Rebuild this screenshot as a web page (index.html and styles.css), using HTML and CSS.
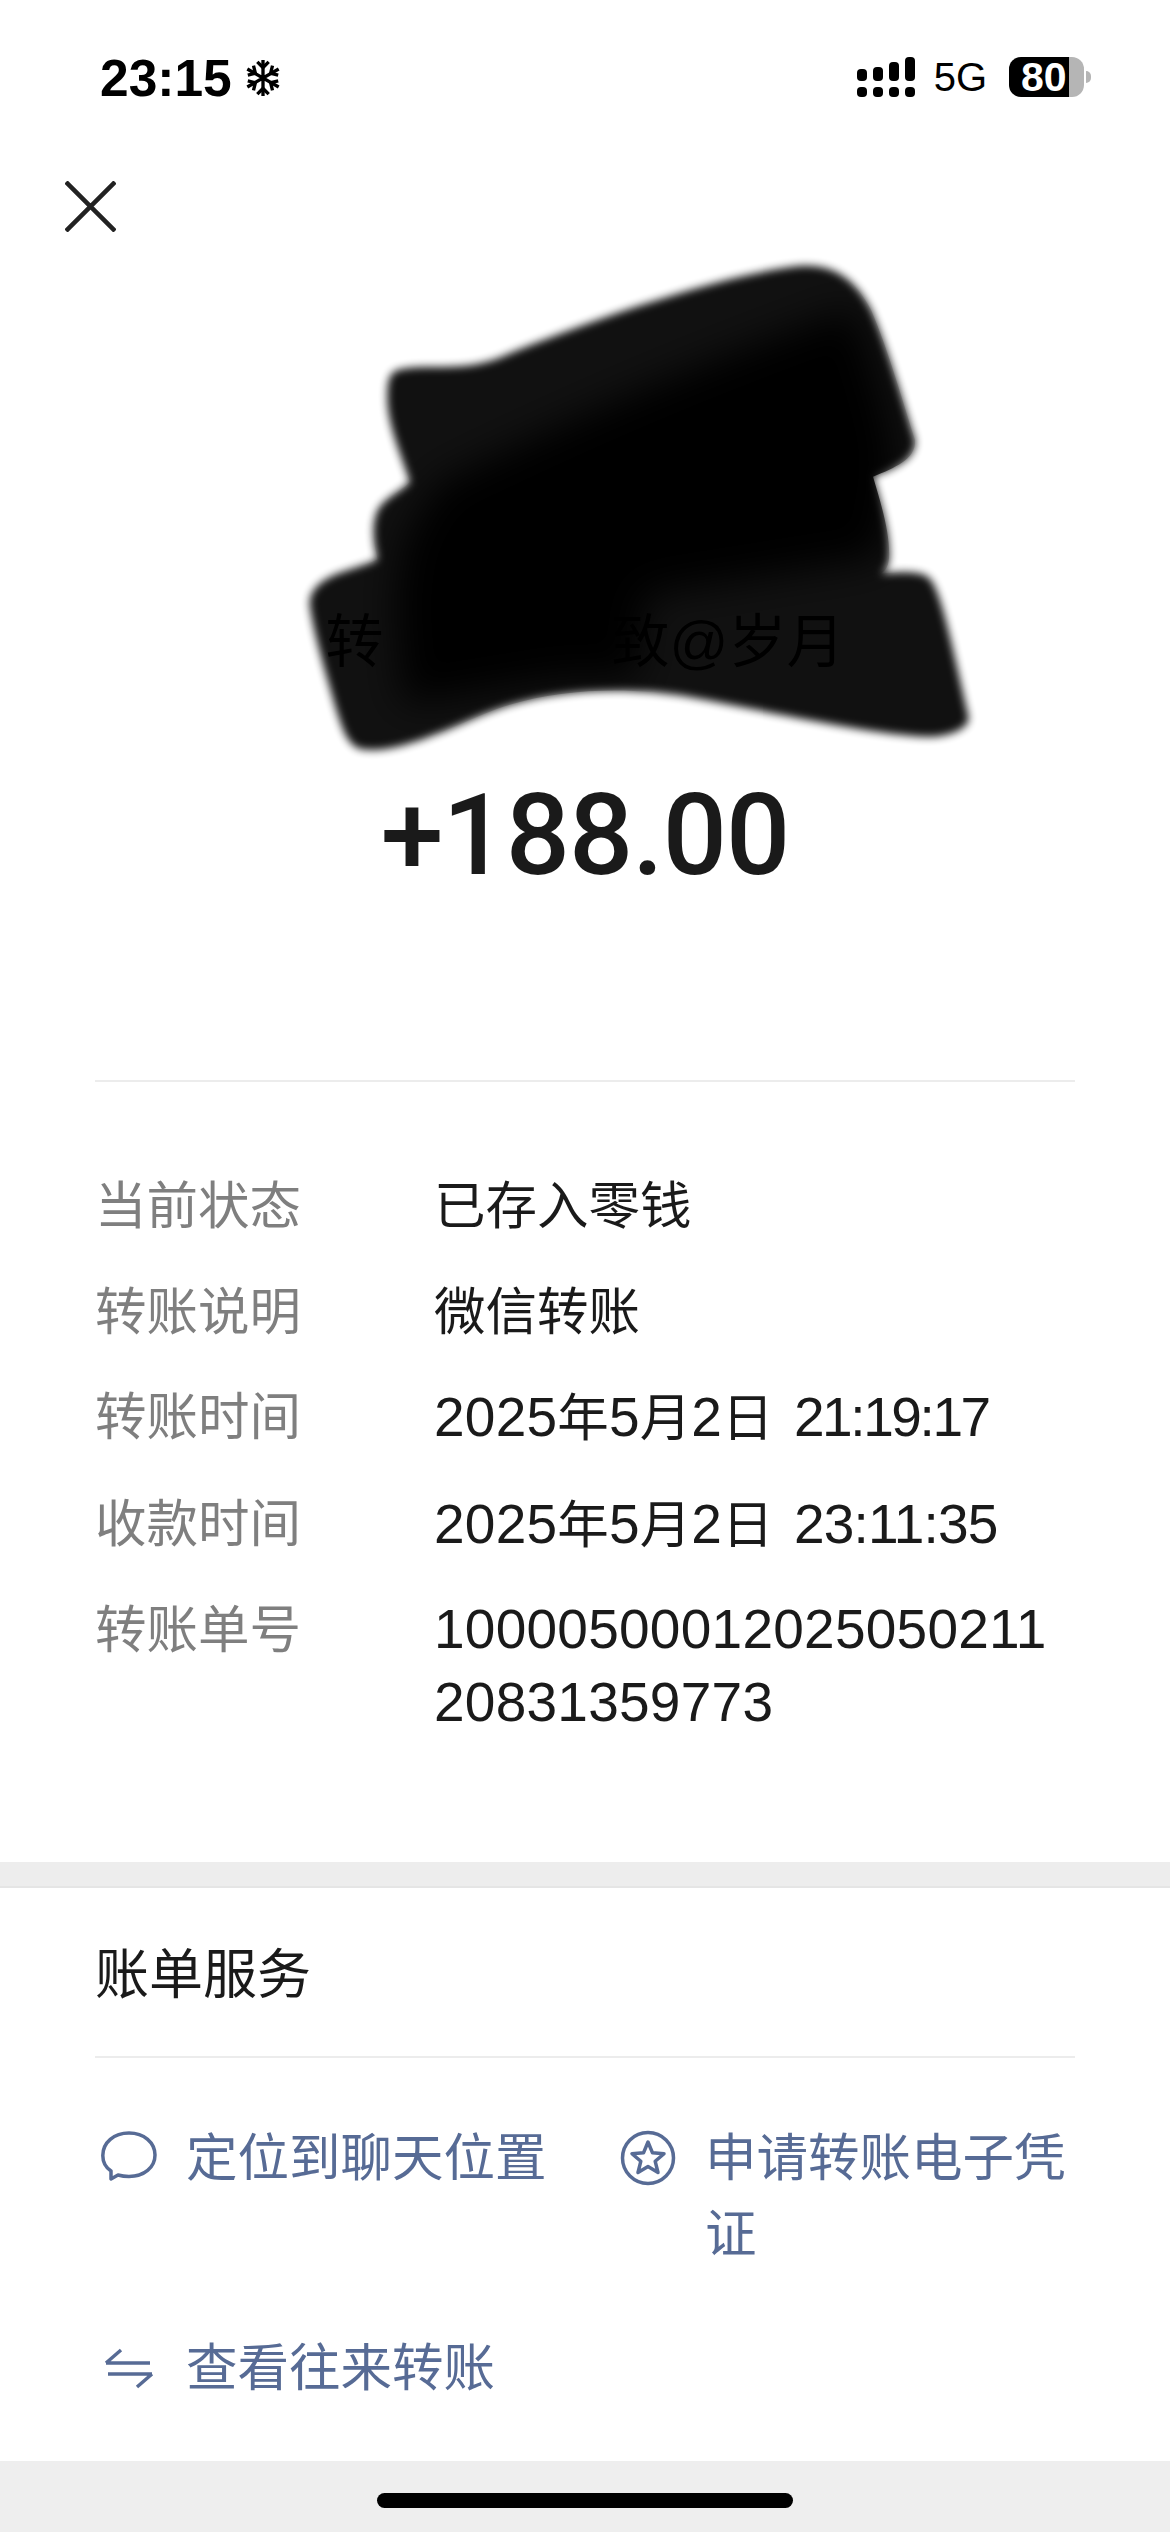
FILE: index.html
```html
<!DOCTYPE html>
<html lang="zh-CN">
<head>
  <meta charset="UTF-8">
  <meta name="viewport" content="width=device-width, initial-scale=1">
  <title>转账详情</title>
  <link rel="stylesheet" href="styles.css">
</head>

<body>
  <div class="status-bar">
    <div class="status-left">
      <span class="clock">23:15</span>
      <svg class="snow" viewBox="0 0 40 40" fill="none" stroke="#000" stroke-width="3.500">
        <path d="M20 1V39M3.5 10.5L36.5 29.500M36.500 10.500L3.500 29.500"/>
        <path d="M14 3L20 9L26 3M14 37L20 31L26 37"/>
        <path d="M4 17L12 15L10 7M36 23L28 25L30 33M36 17L28 15L30 7M4 23L12 25L10 33"/>
      </svg>
    </div>
    <div class="status-right">
      <div class="signal">
        <div class="signal-col"><i class="bar-1"></i><i class="dot"></i></div>
        <div class="signal-col"><i class="bar-2"></i><i class="dot"></i></div>
        <div class="signal-col"><i class="bar-3"></i><i class="dot"></i></div>
        <div class="signal-col"><i class="bar-4"></i><i class="dot"></i></div>
      </div>
      <span class="network">5G</span>
      <div class="battery">80</div>
      <div class="battery-tip"></div>
    </div>
  </div>

  <svg class="close" viewBox="0 0 51 51" fill="none" stroke="#222" stroke-width="4.500">
    <path d="M1 1L50 50M50 1L1 50"/>
  </svg>

  <div class="hero">
    <div class="name">转<span class="name-gap"></span>致@岁月</div>
    <div class="amount">+188.00</div>
  </div>

  <!-- scribble over the name, drawn on top of it -->
  <svg class="scribble" viewBox="0 0 725 1568">
    <defs>
      <path id="blot" d="M246 229C262 224 285 231 310 221C360 200 440 172 490 165C515 161 530 172 540 192C550 215 560 250 567 272C568 284 555 289 541 295C546 312 551 328 551 343C551 350 549 353 546 355C558 354 571 353 576 358C583 365 590 400 600 443C602 450 590 456 575 456C540 455 475 440 425 431C390 425 340 425 300 442C270 455 245 466 226 464C215 463 212 450 208 438C203 420 195 395 192 375C191 365 200 358 212 354C220 351 228 349 234 346C231 335 230 322 235 314C240 307 250 303 254 298C248 280 240 262 240 246C240 236 241 231 246 229Z"/>
      <clipPath id="blot-clip"><use href="#blot"/></clipPath>
      <filter id="soft" x="-10%" y="-10%" width="120%" height="120%"><feGaussianBlur stdDeviation="2.500"/></filter>
      <filter id="softer" x="-20%" y="-20%" width="140%" height="140%"><feGaussianBlur stdDeviation="12"/></filter>
    </defs>
    <use class="scribble-outer" href="#blot" filter="url(#soft)"/>
    <g clip-path="url(#blot-clip)">
      <path class="scribble-inner" filter="url(#softer)" d="M270 300C340 265 430 225 530 190C540 225 555 265 555 290L545 345L400 368L395 420L350 420L250 436L245 372L250 335Z"/>
    </g>
  </svg>

  <div class="info">
    <div class="info-row">
      <div class="info-label">当前状态</div>
      <div class="info-value">已存入零钱</div>
    </div>
    <div class="info-row">
      <div class="info-label">转账说明</div>
      <div class="info-value">微信转账</div>
    </div>
    <div class="info-row">
      <div class="info-label">转账时间</div>
      <div class="info-value"><span class="num">2025</span>年<span class="num">5</span>月<span class="num">2</span>日 <span class="num time time-tight">21:19:17</span></div>
    </div>
    <div class="info-row">
      <div class="info-label">收款时间</div>
      <div class="info-value"><span class="num">2025</span>年<span class="num">5</span>月<span class="num">2</span>日 <span class="num time">23:11:35</span></div>
    </div>
    <div class="info-row">
      <div class="info-label">转账单号</div>
      <div class="info-value serial num">1000050001202505021120831359773</div>
    </div>
  </div>

  <div class="band"></div>

  <div class="service">
    <div class="service-title">账单服务</div>
    <div class="links">
      <div class="link">
        <svg class="link-icon" viewBox="0 0 56 56" fill="none" stroke="#576b95" stroke-width="3.500">
          <path d="M10 41C4 37 1.800 31 1.800 25.500C1.800 12.500 13 3 28 3C43 3 54 12.500 54 25C54 37.500 43 46.500 28 46.500C24 46.500 20.500 46 17 45L10 49Z" stroke-linejoin="round"/>
        </svg>
        <span>定位到聊天位置</span>
      </div>
      <div class="link">
        <svg class="link-icon" viewBox="0 0 56 56" fill="none" stroke="#576b95" stroke-width="3.500">
          <circle cx="28" cy="28" r="25.500"/>
          <path d="M28 12L32.500 22.800L44 23.700L35.200 31.300L38 42.500L28 36.500L18 42.500L20.800 31.300L12 23.700L23.500 22.800Z" stroke-linejoin="round"/>
        </svg>
        <span>申请转账电子凭证</span>
      </div>
      <div class="link">
        <svg class="link-icon" viewBox="0 0 56 56" fill="none" stroke="#576b95" stroke-width="3.500">
          <path d="M5 23H49M5 23L20 10M51 34H7M51 34L36 47"/>
        </svg>
        <span>查看往来转账</span>
      </div>
    </div>
  </div>

  <div class="home-area">
    <div class="home-bar"></div>
  </div>
</body>
</html>
```

FILE: styles.css
```css
* {
  box-sizing: border-box;
  margin: 0;
  padding: 0;
}

body {
  position: relative;
  width: 1170px;
  height: 2532px;
  overflow: hidden;
  background: #fff;
  color: #1a1a1a;
  font-family: "Liberation Sans", "Noto Sans CJK SC", sans-serif;
  font-size: 51.5px;
}

/* status bar */
.status-bar {
  display: flex;
  justify-content: space-between;
  align-items: flex-start;
  height: 97px;
  padding: 57px 79px 0 100px;
}

.status-left {
  display: flex;
  align-items: center;
  gap: 12px;
  color: #000;
}

.clock {
  font-size: 51.5px;
  font-weight: bold;
  line-height: 42px;
}

.snow {
  width: 38px;
  height: 40px;
}

.status-right {
  display: flex;
  align-items: center;
  height: 40px;
  color: #000;
}

.signal {
  display: flex;
  gap: 6px;
  margin-right: 19px;
}

.signal-col {
  display: flex;
  flex-direction: column;
  justify-content: flex-end;
  gap: 6px;
  width: 10px;
  height: 40px;
}

.signal-col i {
  display: block;
  width: 10px;
  background: #000;
  border-radius: 4px;
}

.signal-col .dot { height: 10px; }
.signal-col .bar-1 { height: 12px; }
.signal-col .bar-2 { height: 14px; }
.signal-col .bar-3 { height: 19px; }
.signal-col .bar-4 { height: 24px; }

.network {
  font-size: 40px;
  line-height: 40px;
  margin-right: 22px;
}

.battery {
  width: 75px;
  height: 40px;
  padding-left: 12px;
  background: linear-gradient(90deg, #000 60px, #b5b5b5 60px);
  border-radius: 12px;
  color: #fff;
  font-size: 41px;
  font-weight: bold;
  line-height: 40px;
  white-space: nowrap;
}

.battery-tip {
  width: 5px;
  height: 12px;
  margin-left: 2px;
  background: #b5b5b5;
  border-radius: 0 6px 6px 0;
}

/* close button */
.close {
  display: block;
  width: 51px;
  height: 51px;
  margin: 84px 0 0 65px;
}

/* name + amount */
.hero {
  margin-top: 372px;
  text-align: center;
}

.name {
  font-size: 58px;
  line-height: 76px;
  color: #000;
}

.name-gap {
  display: inline-block;
  width: 228px;
}

.amount {
  margin-top: 81px;
  font-family: Roboto, sans-serif;
  font-size: 113px;
  font-weight: 500;
  letter-spacing: -1px;
  line-height: 150px;
}

.scribble {
  position: absolute;
  top: 0;
  left: 0;
  width: 1170px;
  height: 2532px;
  pointer-events: none;
}

.scribble-outer {
  fill: #000;
  opacity: 0.93;
}

.scribble-inner {
  fill: #000;
}

/* details */
.info {
  display: flex;
  flex-direction: column;
  gap: 30.5px;
  margin: 169px 95px 0;
  padding-top: 87px;
  border-top: 2px solid #ececec;
}

.info-row {
  display: flex;
  line-height: 75px;
}

.info-label {
  flex: none;
  width: 339px;
  color: #7f7f7f;
}

.info-value {
  flex: 1;
  word-break: break-all;
}

.serial {
  max-width: 625px;
  line-height: 73px;
}

.num {
  font-size: 55px;
  letter-spacing: 0.25px;
}

.time {
  margin-left: 6px;
  letter-spacing: -0.8px;
}

.time-tight {
  letter-spacing: -2.4px;
}

.band {
  height: 26px;
  margin-top: 123px;
  background: #ededed;
  border-bottom: 2px solid #e5e5e5;
}

/* bill services */
.service {
  padding: 49px 95px 0;
}

.service-title {
  font-size: 54px;
  line-height: 76px;
  padding-bottom: 43px;
  border-bottom: 2px solid #ececec;
}

.links {
  display: grid;
  grid-template-columns: 519px 1fr;
  row-gap: 58px;
  padding-top: 62px;
  color: #576b95;
  line-height: 76px;
}

.link {
  display: flex;
  gap: 29px;
}

.link-icon {
  flex: none;
  width: 56px;
  height: 56px;
  margin: 10px 0 0 6px;
}

.home-area {
  position: absolute;
  left: 0;
  right: 0;
  bottom: 0;
  display: flex;
  justify-content: center;
  height: 71px;
  padding-top: 32px;
  background: #eee;
}

.home-bar {
  width: 416px;
  height: 15px;
  background: #000;
  border-radius: 8px;
}
```
